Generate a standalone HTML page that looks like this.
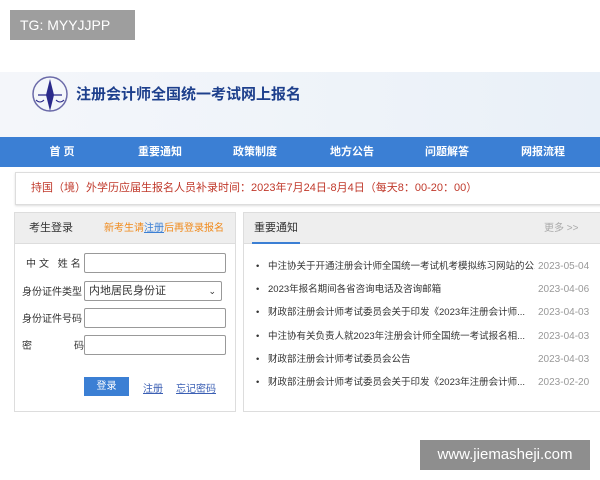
<!DOCTYPE html>
<html><head><meta charset="utf-8"><style>
*{margin:0;padding:0;box-sizing:border-box}
body{width:600px;height:480px;overflow:hidden;background:#fff;font-family:"Liberation Sans","Noto Sans CJK SC",sans-serif;position:relative;font-size:11px;color:#333}
.abs{position:absolute}
.tg{left:10px;top:10px;width:125px;height:30px;background:#9e9e9e;color:#fff;font-size:14px;line-height:30px;padding-left:10px}
.hdr{left:0;top:72px;width:600px;height:65px;background:linear-gradient(90deg,#f4f6fa,#eef3f9 60%,#e9f0f8)}
.title{left:76px;top:83px;font-size:15px;font-weight:bold;color:#1d3f8c}
.nav{left:0;top:137px;width:600px;height:30px;background:#3b7fd4;color:#fff;font-size:11px;font-weight:bold;line-height:30px}
.nav span{position:absolute;transform:translateX(-50%)}
.notice{left:15px;top:172px;width:600px;height:33px;border:1px solid #ddd;color:#c0392b;font-size:11px;line-height:31px;padding-left:15px;box-shadow:0 1px 2px #ddd}
.lp{left:14px;top:212px;width:222px;height:200px;border:1px solid #ddd}
.lh{height:31px;background:#eee;border-bottom:1px solid #ddd;line-height:31px;font-size:11px;white-space:nowrap}
.lbl{position:absolute;left:7px;font-size:10px;color:#333;white-space:nowrap;line-height:12px}
.inp{position:absolute;left:69px;width:142px;height:20px;border:1px solid #999;border-radius:2px;background:#fff}
.rp{left:243px;top:212px;width:370px;height:200px;border:1px solid #ddd}
.rh{height:31px;background:#eee;border-bottom:1px solid #ddd;line-height:31px;font-size:11px;position:relative}
.li{position:absolute;left:12px;font-size:9.5px;line-height:12px;color:#333;width:340px;white-space:nowrap}
.li b{font-weight:normal;display:inline-block;width:12px}
.li i{font-style:normal;position:absolute;top:0;left:282px;color:#999;font-size:10px;line-height:12px;background:#fff;padding-left:3px;margin-left:-3px}
.wm{left:420px;top:440px;width:170px;height:30px;background:#8e8e8e;color:#fff;font-size:15px;line-height:30px;text-align:center}
</style></head><body>
<div class="abs tg">TG: MYYJJPP</div>
<div class="abs hdr"></div>
<svg class="abs" style="left:28px;top:73px" width="45" height="45" viewBox="0 0 45 45">
<circle cx="22" cy="21" r="17" fill="none" stroke="#6a6aa8" stroke-width="1.5"/>
<path d="M22 6 L26 22 L22 38 L18 22Z" fill="#2a2a8a"/>
<path d="M10 22 L34 22" stroke="#2a2a8a" stroke-width="1.2"/>
<path d="M8 27 Q12 31 16 27 M28 27 Q32 31 36 27" stroke="#2a2a8a" fill="none"/>
</svg>
<div class="abs title">注册会计师全国统一考试网上报名</div>
<div class="abs nav">
<span style="left:62px">首 页</span><span style="left:160px">重要通知</span><span style="left:255px">政策制度</span><span style="left:352px">地方公告</span><span style="left:447px">问题解答</span><span style="left:543px">网报流程</span>
</div>
<div class="abs notice">持国（境）外学历应届生报名人员补录时间：2023年7月24日-8月4日（每天8：00-20：00）</div>
<div class="abs lp">
<div class="lh"><span style="margin-left:14px">考生登录</span><span style="margin-left:31px;color:#f08a1c;font-size:10px">新考生请<u style="color:#3b7fd4">注册</u>后再登录报名</span></div>
<div class="lbl" style="top:46px;left:11px;letter-spacing:3px">中文 姓名</div><div class="inp" style="top:40px"></div>
<div class="lbl" style="top:74px">身份证件类型</div><div class="inp" style="top:68px;width:138px;padding-left:4px;font-size:11px;line-height:18px">内地居民身份证<span style="position:absolute;right:5px;font-size:9px">&#8964;</span></div>
<div class="lbl" style="top:101px">身份证件号码</div><div class="inp" style="top:95px"></div>
<div class="lbl" style="top:128px">密<span style="margin-left:42px">码</span></div><div class="inp" style="top:122px"></div>
<div style="position:absolute;left:69px;top:164px;width:45px;height:19px;background:#3b7fd4;color:#fff;font-size:10px;text-align:center;line-height:19px">登录</div>
<u style="position:absolute;left:128px;top:167px;color:#3b5fb4;font-size:10px">注册</u>
<u style="position:absolute;left:161px;top:167px;color:#3b5fb4;font-size:10px">忘记密码</u>
</div>
<div class="abs rp">
<div class="rh"><span style="margin-left:10px">重要通知</span><span style="position:absolute;left:300px;color:#aaa;font-size:10px">更多 &gt;&gt;</span><div style="position:absolute;left:8px;bottom:-1px;width:48px;height:2px;background:#3b7fd4"></div></div>
<div class="li" style="top:48px"><b>•</b>中注协关于开通注册会计师全国统一考试机考模拟练习网站的公...<i>2023-05-04</i></div>
<div class="li" style="top:71px"><b>•</b>2023年报名期间各省咨询电话及咨询邮箱<i>2023-04-06</i></div>
<div class="li" style="top:94px"><b>•</b>财政部注册会计师考试委员会关于印发《2023年注册会计师...<i>2023-04-03</i></div>
<div class="li" style="top:118px"><b>•</b>中注协有关负责人就2023年注册会计师全国统一考试报名相...<i>2023-04-03</i></div>
<div class="li" style="top:141px"><b>•</b>财政部注册会计师考试委员会公告<i>2023-04-03</i></div>
<div class="li" style="top:164px"><b>•</b>财政部注册会计师考试委员会关于印发《2023年注册会计师...<i>2023-02-20</i></div>
</div>
<div class="abs wm">www.jiemasheji.com</div>
</body></html>
